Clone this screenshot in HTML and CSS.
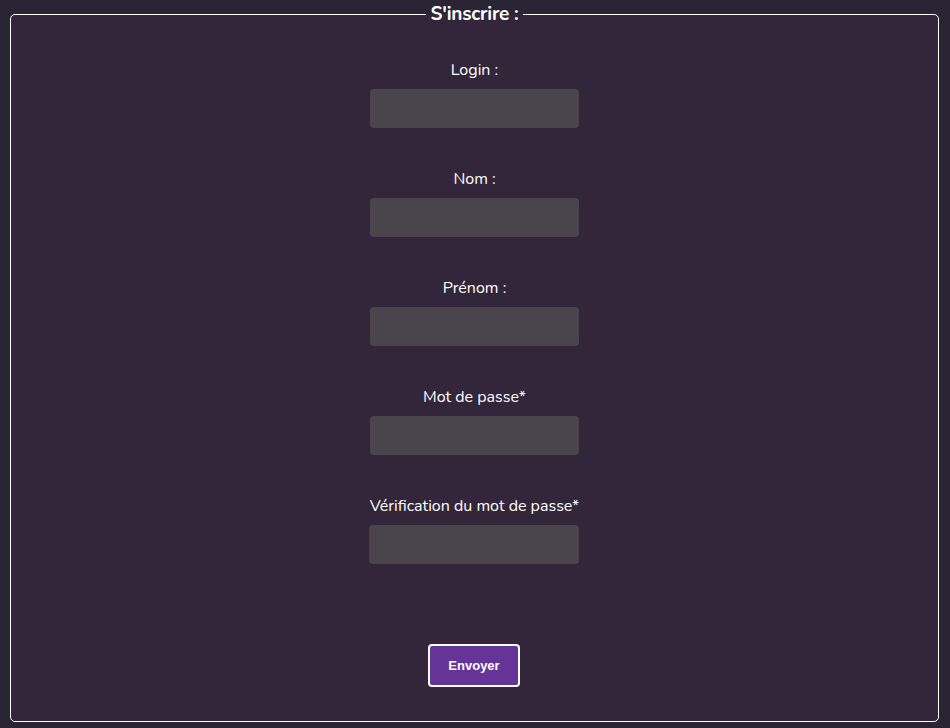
FILE: index.html
```html
<!DOCTYPE html>
<html lang="fr">
<head>
<meta charset="utf-8">
<title>S'inscrire</title>
<link rel="stylesheet" href="styles.css">
</head>
<body>
<form class="signup" action="#" method="post">
  <fieldset class="box">
    <legend class="box-title">S'inscrire :</legend>
    <div class="fields">
      <div class="field">
        <label class="field-label" for="login">Login :</label>
        <input class="field-input" type="text" id="login" name="login">
      </div>
      <div class="field">
        <label class="field-label" for="nom">Nom :</label>
        <input class="field-input" type="text" id="nom" name="nom">
      </div>
      <div class="field">
        <label class="field-label" for="prenom">Prénom :</label>
        <input class="field-input" type="text" id="prenom" name="prenom">
      </div>
      <div class="field">
        <label class="field-label" for="mdp">Mot de passe*</label>
        <input class="field-input" type="password" id="mdp" name="mdp">
      </div>
      <div class="field">
        <label class="field-label" for="mdp2">Vérification du mot de passe*</label>
        <input class="field-input field-input-wide" type="password" id="mdp2" name="mdp2">
      </div>
      <button class="submit" type="submit">Envoyer</button>
    </div>
  </fieldset>
</form>
</body>
</html>
```
FILE: styles.css
```css
html, body {
  margin: 0;
  padding: 0;
  background: #2a2535;
}

body {
  height: 728px;
  overflow: hidden;
  font-family: "Nunito", "Noto Sans", "Liberation Sans", sans-serif;
  color: #ffffff;
}

.signup {
  margin: 0;
  padding: 0 11px 0 10px;
}

.box {
  margin: 0;
  padding: 0;
  border: 1px solid #ffffff;
  border-radius: 5px;
  background: #33263a;
  min-width: 0;
}

.box-title {
  margin: 0 auto;
  padding: 0 4px;
  font-size: 19px;
  line-height: 28px;
  font-weight: 700;
  letter-spacing: -0.2px;
  color: #ffffff;
}

.fields {
  display: flex;
  flex-direction: column;
  align-items: center;
  padding: 32px 0 34px;
}

.field {
  display: flex;
  flex-direction: column;
  align-items: center;
  margin-bottom: 41px;
}

.field:last-of-type {
  margin-bottom: 80px;
}

.field-label {
  font-size: 16px;
  line-height: 20px;
  margin-bottom: 9px;
  white-space: nowrap;
}

.field-input {
  box-sizing: border-box;
  width: 209px;
  height: 39px;
  border: none;
  border-radius: 4px;
  background: #4a454d;
  color: #ffffff;
  padding: 0 8px;
  font: inherit;
  outline: none;
}

.field-input-wide {
  width: 210px;
  margin-right: 1px;
}

.submit {
  box-sizing: border-box;
  width: 92px;
  height: 43px;
  margin-right: 1px;
  border: 2px solid #ffffff;
  border-radius: 4px;
  background: #663399;
  color: #ffffff;
  font-family: "Liberation Sans", Arial, sans-serif;
  font-size: 13px;
  font-weight: 700;
  padding: 0;
  cursor: pointer;
}
```
